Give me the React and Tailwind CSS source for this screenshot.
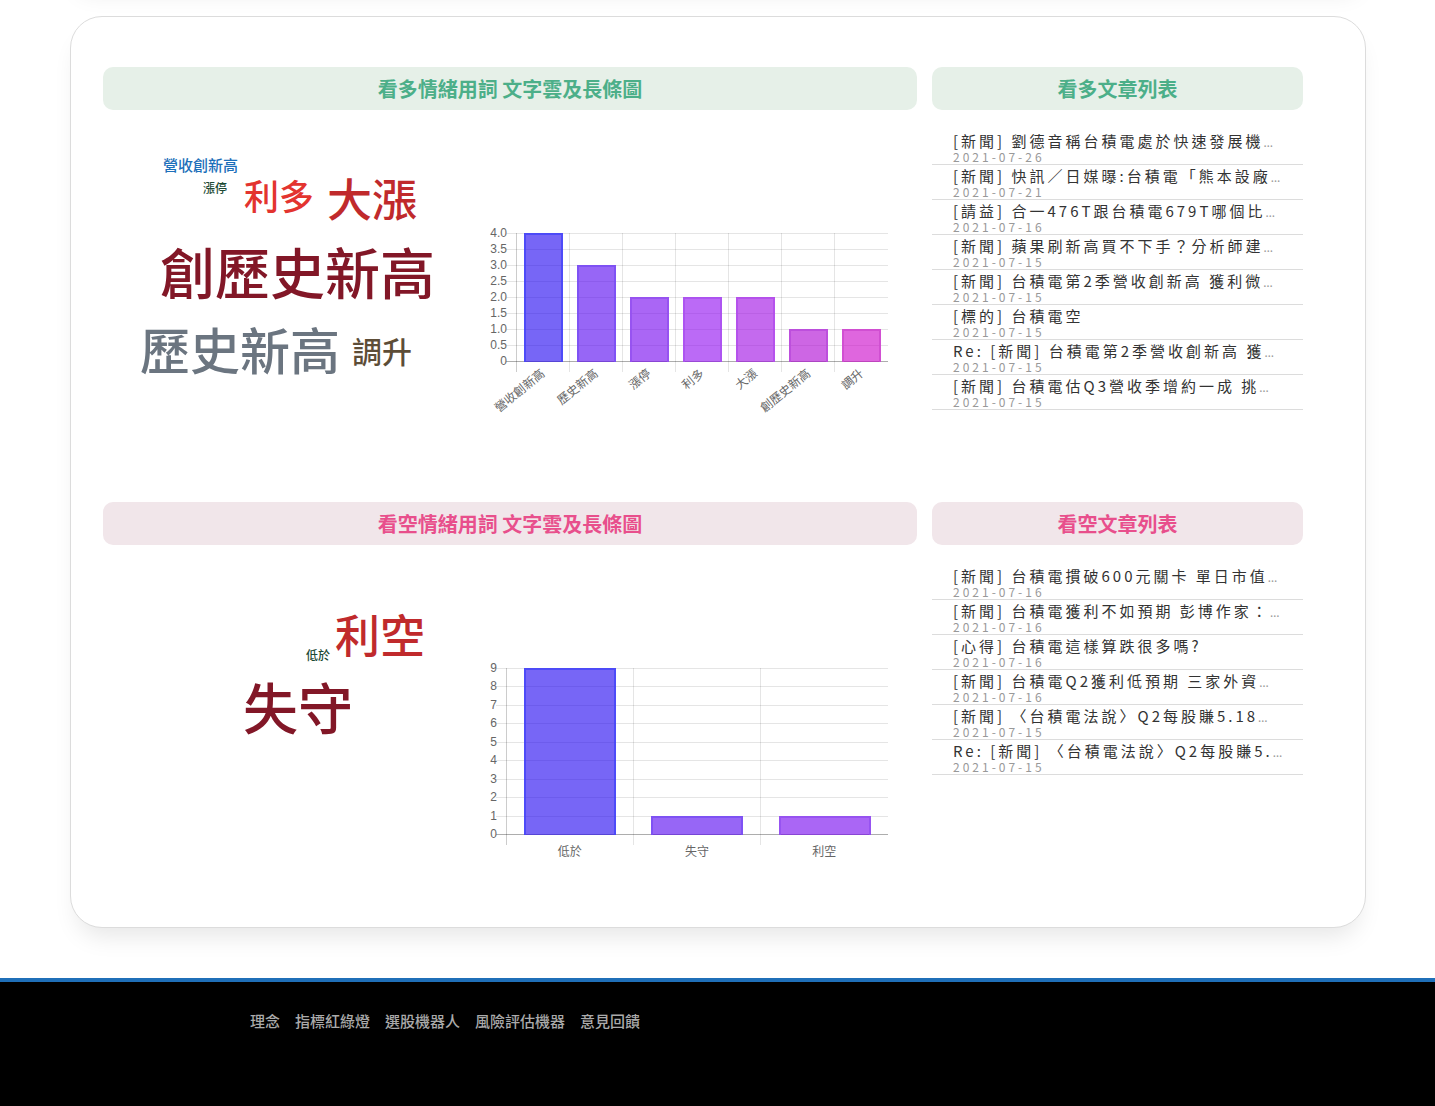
const bullArticles = [
  ["[新聞] 劉德音稱台積電處於快速發展機", true, "2021-07-26"],
  ["[新聞] 快訊／日媒曝:台積電「熊本設廠", true, "2021-07-21"],
  ["[請益] 合一476T跟台積電679T哪個比", true, "2021-07-16"],
  ["[新聞] 蘋果刷新高買不下手？分析師建", true, "2021-07-15"],
  ["[新聞] 台積電第2季營收創新高 獲利微", true, "2021-07-15"],
  ["[標的] 台積電空", false, "2021-07-15"],
  ["Re: [新聞] 台積電第2季營收創新高 獲", true, "2021-07-15"],
  ["[新聞] 台積電估Q3營收季增約一成 挑", true, "2021-07-15"],
];

const bearArticles = [
  ["[新聞] 台積電摜破600元關卡 單日市值", true, "2021-07-16"],
  ["[新聞] 台積電獲利不如預期 彭博作家：", true, "2021-07-16"],
  ["[心得] 台積電這樣算跌很多嗎?", false, "2021-07-16"],
  ["[新聞] 台積電Q2獲利低預期 三家外資", true, "2021-07-16"],
  ["[新聞] 〈台積電法說〉Q2每股賺5.18", true, "2021-07-15"],
  ["Re: [新聞] 〈台積電法說〉Q2每股賺5.", true, "2021-07-15"],
];

// [text, x, baseline, size, colour]
const bullCloud = [
  ["營收創新高", 60, 61, 15, "#1c6fba"],
  ["漲停", 100, 83, 12, "#1d4a35"],
  ["利多", 141, 100, 35, "#e3342f"],
  ["大漲", 224, 107, 45, "#c02a2c"],
  ["創歷史新高", 57, 184, 55, "#821727"],
  ["歷史新高", 37, 260, 50, "#6b7580"],
  ["調升", 249, 253, 30, "#5d4d37"],
];

const bearCloud = [
  ["利空", 232, 108, 45, "#c02a2c"],
  ["低於", 203, 115, 12, "#1d4a35"],
  ["失守", 140, 184, 55, "#821727"],
];

// [fill, outline]
const barColors = [
  ["#1c00f0", "#4646f8"],
  ["#5100f0", "#7a4ff3"],
  ["#7100ee", "#9450f0"],
  ["#8e06f0", "#aa50f0"],
  ["#9d06e3", "#b34eeb"],
  ["#ac00d2", "#ba4bdc"],
  ["#ca00c8", "#cf4bd0"],
];

const bullData = [
  ["營收創新高", 4],
  ["歷史新高", 3],
  ["漲停", 2],
  ["利多", 2],
  ["大漲", 2],
  ["創歷史新高", 1],
  ["調升", 1],
];

const bearData = [
  ["低於", 9],
  ["失守", 1],
  ["利空", 1],
];

function WordCloud({ words, label }) {
  return (
    <svg viewBox="0 0 374 330" className="block w-full font-medium" role="img" aria-label={label}>
      {words.map(([text, x, y, size, color]) => (
        <text key={text} x={x} y={y} fontSize={size} fill={color}>
          {text}
        </text>
      ))}
    </svg>
  );
}

function BarChart({ data, ticks, left, bottom, slanted, label }) {
  const top = 123;
  const right = 411;
  const max = Number(ticks[ticks.length - 1]);
  const slot = (right - left) / data.length;
  const bar = slot * 0.717;
  const yOf = (v) => bottom - (v / max) * (bottom - top);
  return (
    <svg viewBox="0 0 440 330" className="block w-full" role="img" aria-label={label}>
      {ticks.map((t) => {
        const y = Math.round(yOf(Number(t))) + 0.5;
        return (
          <g key={t}>
            <line x1={left - 10} x2={right} y1={y} y2={y} stroke="#000" strokeOpacity={t === "0" ? 0.32 : 0.1} />
            <text
              x={left - 9}
              y={Math.round(y + 3)}
              textAnchor="end"
              fontSize="12"
              fill="#666"
              className="font-['Liberation_Sans',sans-serif]"
            >
              {t}
            </text>
          </g>
        );
      })}
      {data.map(([name], i) => {
        const x = Math.floor(left + slot * i) + 0.5;
        return (
          <line key={name} x1={x} x2={x} y1={top} y2={bottom + 11} stroke="#000" strokeOpacity={i === 0 ? 0.2 : 0.1} />
        );
      })}
      {data.map(([name, value], i) => {
        const center = left + slot * (i + 0.5);
        const x = Math.round(center - bar / 2);
        const w = Math.ceil(bar);
        const y = Math.round(yOf(value));
        const base = bottom + 1;
        const [fill, outline] = barColors[i];
        return (
          <g key={name}>
            <rect x={x} y={y} width={w} height={base - y} fill={fill} fillOpacity="0.6" />
            <path
              d={`M${x + 1} ${base}V${y + 1}H${x + w - 1}V${base}`}
              fill="none"
              stroke={outline}
              strokeOpacity="0.85"
              strokeWidth="2"
            />
            {slanted ? (
              <text
                transform={`translate(${center + 3} ${bottom + 14}) rotate(-39)`}
                textAnchor="end"
                fontSize="12"
                fill="#666"
              >
                {name}
              </text>
            ) : (
              <text x={center} y={bottom + 22} textAnchor="middle" fontSize="12" fill="#666">
                {name}
              </text>
            )}
          </g>
        );
      })}
    </svg>
  );
}

function ArticleList({ articles }) {
  return (
    <ul className="mt-5">
      {articles.map(([title, cut, date]) => (
        <li key={title} className="border-b border-[#dcdcdc] py-px pr-5 pl-[21px] text-xs tracking-[3px] text-[#999]">
          <p className="h-5 overflow-hidden leading-5 whitespace-nowrap">
            <a href="#" className="text-[15px] text-[#333]">
              {title}
            </a>
            {cut && <span className="font-['Noto_Sans',sans-serif] tracking-normal">…</span>}
          </p>
          <time className="block leading-3">{date}</time>
        </li>
      ))}
    </ul>
  );
}

function Heading({ tone, children }) {
  const colors = tone === "bull" ? "bg-[#e6f0e8] text-[#4caf89]" : "bg-[#f1e6ea] text-[#e84f8c]";
  return <h2 className={`rounded-[10px] py-2 text-center text-xl leading-[27px] font-bold ${colors}`}>{children}</h2>;
}

function Sentiment({ tone, name, cloud, articles, chart }) {
  return (
    <section className="grid grid-cols-[814fr_371fr] gap-x-[15px]">
      <div>
        <Heading tone={tone}>{name}情緒用詞 文字雲及長條圖</Heading>
        <div className="grid grid-cols-[374fr_440fr]">
          <WordCloud words={cloud} label={`${name}文字雲`} />
          {chart}
        </div>
      </div>
      <div>
        <Heading tone={tone}>{name}文章列表</Heading>
        <ArticleList articles={articles} />
      </div>
    </section>
  );
}

export default function App() {
  return (
    <div lang="zh-Hant" className="min-h-screen overflow-hidden bg-white font-['Noto_Sans_CJK_TC',sans-serif]">
      <div className="mr-[69px] ml-[70px] -mt-14 h-10 rounded-[30px] shadow-[0_16px_24px_-8px_rgba(0,0,0,0.1)]" />
      <main className="mt-8 mr-[69px] ml-[70px] flex flex-col gap-[62px] rounded-[32px] border border-[#dcdcdc] bg-white pt-[50px] pr-[62px] pb-[52px] pl-8 shadow-[0_16px_24px_-8px_rgba(0,0,0,0.1)]">
        <Sentiment
          tone="bull"
          name="看多"
          cloud={bullCloud}
          articles={bullArticles}
          chart={
            <BarChart
              data={bullData}
              ticks={["0", "0.5", "1.0", "1.5", "2.0", "2.5", "3.0", "3.5", "4.0"]}
              left={39}
              bottom={251}
              slanted
              label="看多長條圖"
            />
          }
        />
        <Sentiment
          tone="bear"
          name="看空"
          cloud={bearCloud}
          articles={bearArticles}
          chart={
            <BarChart
              data={bearData}
              ticks={["0", "1", "2", "3", "4", "5", "6", "7", "8", "9"]}
              left={29}
              bottom={289}
              label="看空長條圖"
            />
          }
        />
      </main>
      <footer className="mt-[50px] border-t-4 border-[#1f6fb8] bg-black px-[250px] pt-[29px] pb-[75px]">
        <nav className="flex gap-[15px] text-[15px] leading-5 font-medium text-[#aaa]">
          <a href="#">理念</a>
          <a href="#">指標紅綠燈</a>
          <a href="#">選股機器人</a>
          <a href="#">風險評估機器</a>
          <a href="#">意見回饋</a>
        </nav>
      </footer>
    </div>
  );
}
